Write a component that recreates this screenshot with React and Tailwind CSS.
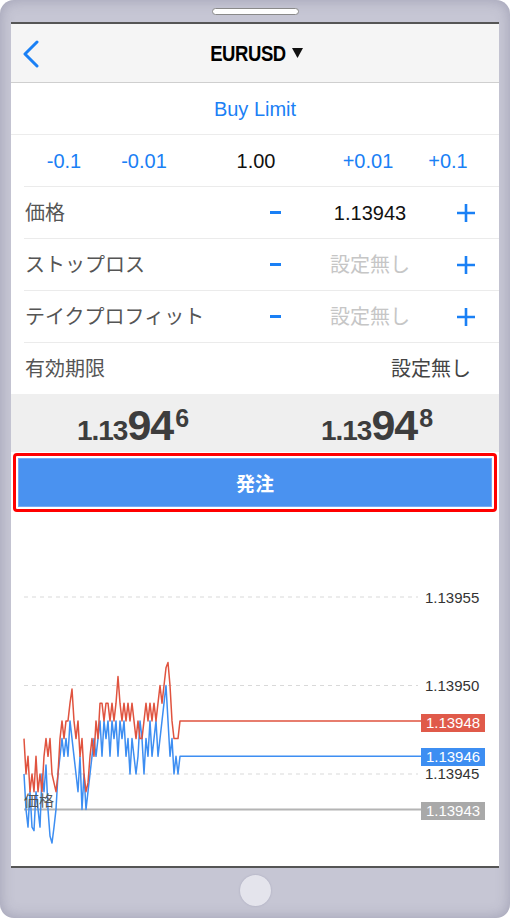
import React from 'react';

const red = [47,45,46,44,45,44,46,44,45,44,46,47,46,47,45,44.5,44,45,47,48,47,48,48,49,49.8,48,47,48,46,47,45,44,44.5,46,47,46,48,47,49,49,48,49,49,48,49,48,49,50.5,49,48,49,48,49,48,49,48,47,48,47,47,48,49,48,49,48,49,48,49,50,49,50,51,51.3,50,48,47,47,47,48,48];
const blue = [45,43,42,44,42,41.8,44,43,42,45,44,45.5,43,41.5,41.1,42,43,45,46,47,46,47,46,48,47,46,45,44,46,43,45,43,44,45,46,47,46,47,48,46,48,47,48,46,48,47,48,46,48,47,48,46,47,45,47,46,45,46,48,47,45,47,46,48,46,47,48,46,47,48,49,50,48,46,47,45,46,45,46,46];

const py = (v) => 597 + (55 - v) * 17.7;
const line = (arr) =>
  arr.map((v, i) => `${24 + i * 2},${py(v).toFixed(1)}`).join(' ') + ` 421,${py(arr[arr.length - 1]).toFixed(1)}`;

const Plus = () => (
  <svg width="20" height="20" viewBox="0 0 20 20">
    <path d="M10 1v18M1 10h18" stroke="#1a80f5" strokeWidth="2.6" />
  </svg>
);

const Minus = () => <span className="block w-[11px] h-[3px] bg-[#1a80f5]" />;

const StepRow = ({ label, value, muted }) => (
  <div className="pl-[13px] h-[52px]">
    <div className="h-full flex items-center border-b border-[#ebebeb]">
      <span className="flex-1 text-[20px] text-[#555] pl-[1px]">{label}</span>
      <div className="w-[40px] flex justify-center"><Minus /></div>
      <span className={`w-[150px] text-center text-[20px] ${muted ? 'text-[#c6c6c6]' : 'text-[#111]'}`}>{value}</span>
      <div className="w-[42px] flex justify-center"><Plus /></div>
      <div className="w-[12px]" />
    </div>
  </div>
);

const Quote = ({ last }) => (
  <div className="flex items-baseline justify-center text-[#3d3d3d] font-bold">
    <span className="text-[28px] leading-none tracking-[-1px]">1.13</span>
    <span className="text-[43px] leading-none tracking-[-1px]">94</span>
    <span className="text-[25px] leading-none self-start mt-[2px] ml-[2px]">{last}</span>
  </div>
);

const Tag = ({ top, bg, children }) => (
  <div
    className={`absolute left-[410px] w-[64px] h-[18px] flex items-center justify-center text-[15px] text-white ${bg} ${top}`}
  >
    {children}
  </div>
);

export default function App() {
  return (
    <div className="bg-white w-[510px] h-[918px] font-['Liberation_Sans','Noto_Sans_CJK_JP',sans-serif]">
      <div className="w-[510px] h-[918px] rounded-[14px] bg-[#c6c6d4] shadow-[inset_0_0_14px_rgba(90,90,120,0.35)] flex flex-col">
        <div className="h-[22px] pt-[8px] flex justify-center">
          <div className="w-[87px] h-[7px] rounded-full bg-white border border-[#8a8a8a]" />
        </div>

        <div className="mx-[11px] h-[846px] bg-white border-t-2 border-b-2 border-[#555] flex flex-col">
          <div className="h-[59px] bg-[#f5f5f5] border-b border-[#cfcfcf] flex items-center relative">
            <svg className="absolute left-[11px] top-[16px]" width="18" height="28" viewBox="0 0 18 28">
              <path d="M15 2 3 14l12 12" fill="none" stroke="#1a80f5" strokeWidth="3" strokeLinecap="round" strokeLinejoin="round" />
            </svg>
            <div className="flex-1 flex items-center justify-center gap-[6px] pl-[2px]">
              <span className="inline-block font-bold text-[22px] text-black scale-x-[0.84] tracking-[-0.5px] -mx-[6px]">EURUSD</span>
              <svg width="11" height="10" viewBox="0 0 11 10">
                <path d="M0 0h11L5.5 10z" fill="#111" />
              </svg>
            </div>
          </div>

          <div className="h-[52px] border-b border-[#ececec] flex items-center justify-center text-[20px] text-[#1a80f5]">
            Buy Limit
          </div>

          <div className="pl-[13px] h-[52px]">
            <div className="h-full flex items-center border-b border-[#ebebeb] text-[20px]">
              <span className="w-[80px] text-center text-[#1a80f5]">-0.1</span>
              <span className="w-[80px] text-center text-[#1a80f5]">-0.01</span>
              <span className="flex-1 text-center text-[#111]">1.00</span>
              <span className="w-[80px] text-center text-[#1a80f5]">+0.01</span>
              <span className="w-[80px] text-center text-[#1a80f5]">+0.1</span>
              <div className="w-[11px]" />
            </div>
          </div>

          <StepRow label="価格" value="1.13943" />
          <StepRow label="ストップロス" value="設定無し" muted />
          <StepRow label="テイクプロフィット" value="設定無し" muted />

          <div className="h-[51px] pl-[14px] pr-[28px] flex items-center justify-between text-[20px]">
            <span className="text-[#555]">有効期限</span>
            <span className="text-[#444]">設定無し</span>
          </div>

          <div className="h-[58px] bg-[#efefef] grid grid-cols-2 pt-[10px]">
            <Quote last="6" />
            <Quote last="8" />
          </div>

          <div className="h-[61px] px-[2px] py-[1px]">
            <div className="h-full border-[3px] border-[#ff0000] rounded-[4px] p-[2px]">
              <div className="h-full bg-[#4a92f0] border border-[#76acf4] flex items-center justify-center pt-[5px] text-white font-bold text-[19px]">
                発注
              </div>
            </div>
          </div>

          <div className="h-[353px] relative">
            <svg className="absolute inset-0" width="488" height="353" viewBox="11 513 488 353">
              {[597, 685.5, 774].map((y) => (
                <line key={y} x1="24" x2="418" y1={y} y2={y} stroke="#d9d9d9" strokeWidth="1" strokeDasharray="4 4" />
              ))}
              <line x1="24" x2="421" y1="809.5" y2="809.5" stroke="#b4b4b4" strokeWidth="2" />
              <polyline points={line(blue)} fill="none" stroke="#3d8ef2" strokeWidth="1.5" strokeLinejoin="round" />
              <polyline points={line(red)} fill="none" stroke="#e0533f" strokeWidth="1.5" strokeLinejoin="round" />
            </svg>
            <div className="absolute left-[414px] top-[76px] text-[15px] leading-[18px] text-[#333]">1.13955</div>
            <div className="absolute left-[414px] top-[164px] text-[15px] leading-[18px] text-[#333]">1.13950</div>
            <div className="absolute left-[414px] top-[252px] text-[15px] leading-[18px] text-[#333]">1.13945</div>
            <Tag top="top-[201px]" bg="bg-[#e05a4a]">1.13948</Tag>
            <Tag top="top-[235px]" bg="bg-[#3d8ef2]">1.13946</Tag>
            <Tag top="top-[289px]" bg="bg-[#a9a9a9]">1.13943</Tag>
            <div className="absolute left-[13px] top-[279px] text-[15px] leading-[18px] text-[#555]">価格</div>
          </div>
        </div>

        <div className="flex-1 flex justify-center pt-[7px]">
          <div className="w-[31px] h-[31px] rounded-full bg-[#e4e4ec] shadow-[0_0_2px_rgba(120,120,150,0.4)]" />
        </div>
      </div>
    </div>
  );
}
